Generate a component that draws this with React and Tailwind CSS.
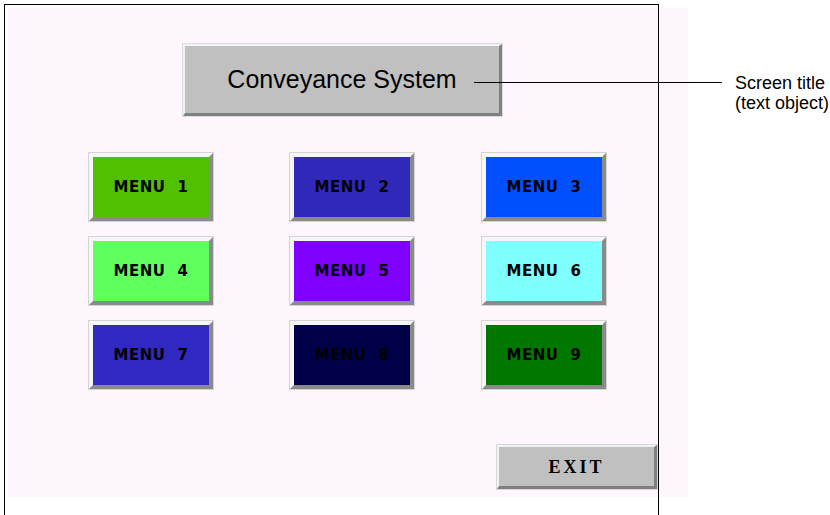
import React from 'react';

const rows = [
  [
    { n: 1, bg: 'bg-[#50c000]' },
    { n: 2, bg: 'bg-[#3028b8]' },
    { n: 3, bg: 'bg-[#0050ff]' },
  ],
  [
    { n: 4, bg: 'bg-[#60ff60]' },
    { n: 5, bg: 'bg-[#8000ff]' },
    { n: 6, bg: 'bg-[#80ffff]' },
  ],
  [
    { n: 7, bg: 'bg-[#3028c0]' },
    { n: 8, bg: 'bg-[#000048]' },
    { n: 9, bg: 'bg-[#007800]' },
  ],
];

const MenuButton = ({ n, bg, className = '' }) => (
  <div className={`w-[124px] h-[68px] outline outline-1 outline-[#d4d4d4] border-t-[4px] border-l-[4px] border-b-[4px] border-r-[4px] border-t-[#f6f6f6] border-l-[#f6f6f6] border-b-[#8a8a8a] border-r-[#8a8a8a] ${className}`}>
    <div className={`w-full h-full ${bg} flex items-center justify-center gap-[12px] font-['DejaVu_Sans',sans-serif] font-bold text-[15px] text-black tracking-[0.5px] leading-none`}>
      <span>MENU</span>
      <span>{n}</span>
    </div>
  </div>
);

const App = () => {
  return (
    <div className="relative w-[830px] h-[515px] bg-white overflow-hidden">
      {/* pink screen area */}
      <div className="ml-[8px] pt-[8px]">
        <div className="w-[680px] h-[489px] bg-[#fdf7fd] flex flex-col">
          {/* title */}
          <div className="ml-[175px] mt-[36px] w-[319px] h-[72px] bg-[#c0c0c0] border-t-2 border-l-2 border-t-[#f2f2f2] border-l-[#f2f2f2] border-b-[3px] border-r-[3px] border-b-[#808080] border-r-[#808080] outline outline-1 outline-[#dcdcdc] flex items-center justify-center">
            <span className="font-['Liberation_Sans',Arial,sans-serif] text-[25px] text-black leading-none">Conveyance System</span>
          </div>

          {/* menu grid */}
          <div className="mt-[37px] flex flex-col gap-[16px]">
            {rows.map((row, i) => (
              <div key={i} className="flex ml-[81px]">
                <MenuButton {...row[0]} />
                <MenuButton {...row[1]} className="ml-[77px]" />
                <MenuButton {...row[2]} className="ml-[68px]" />
              </div>
            ))}
          </div>

          {/* exit */}
          <div className="ml-[489px] mt-[56px] w-[160px] h-[44px] bg-[#c0c0c0] border-t-2 border-l-2 border-t-[#f2f2f2] border-l-[#f2f2f2] border-b-[3px] border-r-[3px] border-b-[#808080] border-r-[#808080] outline outline-1 outline-[#d8d8d8] flex items-center justify-center">
            <span className="font-['Liberation_Serif','Times_New_Roman',serif] font-bold text-[18px] tracking-[3px] text-black leading-none">EXIT</span>
          </div>
        </div>
      </div>

      {/* screen frame */}
      <div className="absolute left-[4px] top-[4px] w-[655px] h-[530px] border border-black pointer-events-none" />

      {/* callout */}
      <div className="absolute left-[474px] top-[82px] w-[248px] h-px bg-black" />
      <div className="absolute left-[735px] top-[73px] font-['Liberation_Sans',Arial,sans-serif] text-[18px] leading-[20px] text-black">
        <div>Screen title</div>
        <div>(text object)</div>
      </div>
    </div>
  );
};

export default App;
